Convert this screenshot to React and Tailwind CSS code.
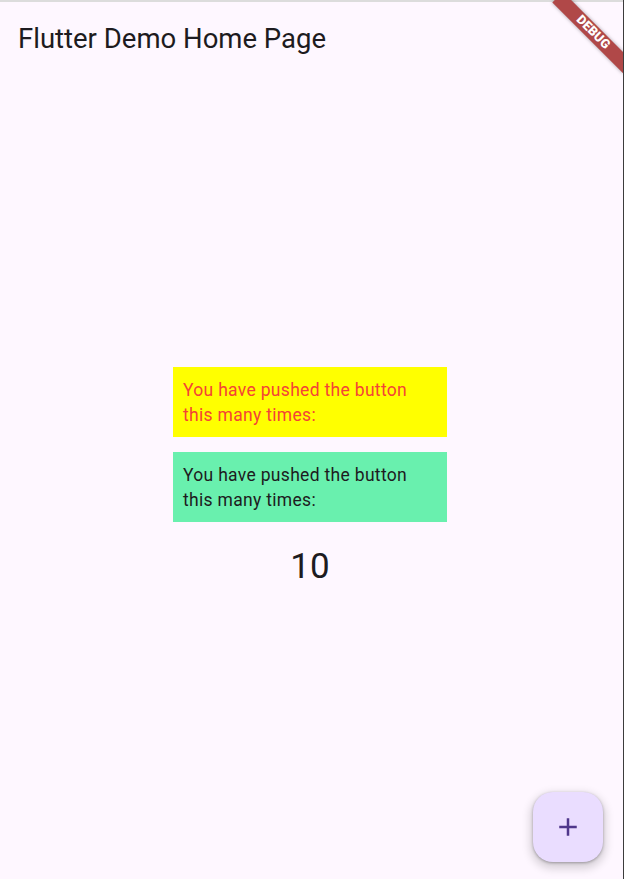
import React from 'react';

function PlusIcon() {
  return (
    <svg width="30" height="30" viewBox="0 0 24 24" fill="#4f378b">
      <path d="M19 13h-6v6h-2v-6H5v-2h6V5h2v6h6v2z" />
    </svg>
  );
}

export default function App() {
  const [count, setCount] = React.useState(10);

  return (
    <div className="relative w-[624px] h-[879px] overflow-hidden bg-[#fef7ff] flex flex-col font-['Roboto',sans-serif] text-[#1d1b20]">
      {/* top frame line */}
      <div className="h-[2px] bg-[#dcdcdc]" />

      {/* App bar */}
      <header className="h-[72px] flex items-center pl-[18px]">
        <h1 className="text-[27.5px] leading-[35px] font-normal">Flutter Demo Home Page</h1>
      </header>

      {/* Body */}
      <main className="flex-1 flex flex-col items-center justify-center pr-[4px] pt-[2px]">
        <div className="w-[274px] bg-[#ffff00] pt-[11px] pb-[9px] px-[10px] text-[17.5px] leading-[25px] tracking-[0.31px] text-[#f44336]">
          <div className="w-[240px]">You have pushed the button this many times:</div>
        </div>
        <div className="w-[274px] mt-[15px] bg-[#69f0ae] pt-[11px] pb-[9px] px-[10px] text-[17.5px] leading-[25px] tracking-[0.31px]">
          <div className="w-[240px]">You have pushed the button this many times:</div>
        </div>
        <div className="mt-[22px] text-[35px] leading-[45px]">{count}</div>
      </main>

      {/* FAB */}
      <button
        onClick={() => setCount(count + 1)}
        className="absolute right-[21px] bottom-[17px] w-[70px] h-[70px] rounded-[20px] bg-[#eaddff] flex items-center justify-center shadow-[0_4px_8px_3px_rgba(0,0,0,0.15),0_1px_3px_rgba(0,0,0,0.3)]"
      >
        <PlusIcon />
      </button>

      {/* Debug banner */}
      <div className="absolute left-[543px] top-[24.5px] w-[100px] h-[15px] rotate-45 bg-[#b04848] shadow-[0_0_4px_rgba(0,0,0,0.35)] flex items-center justify-center">
        <span className="text-white text-[12.75px] leading-none font-black tracking-[0.2px]">DEBUG</span>
      </div>

      {/* right frame edge */}
      <div className="absolute right-0 top-0 w-[1px] h-full bg-[#3c3c3c]" />
    </div>
  );
}
